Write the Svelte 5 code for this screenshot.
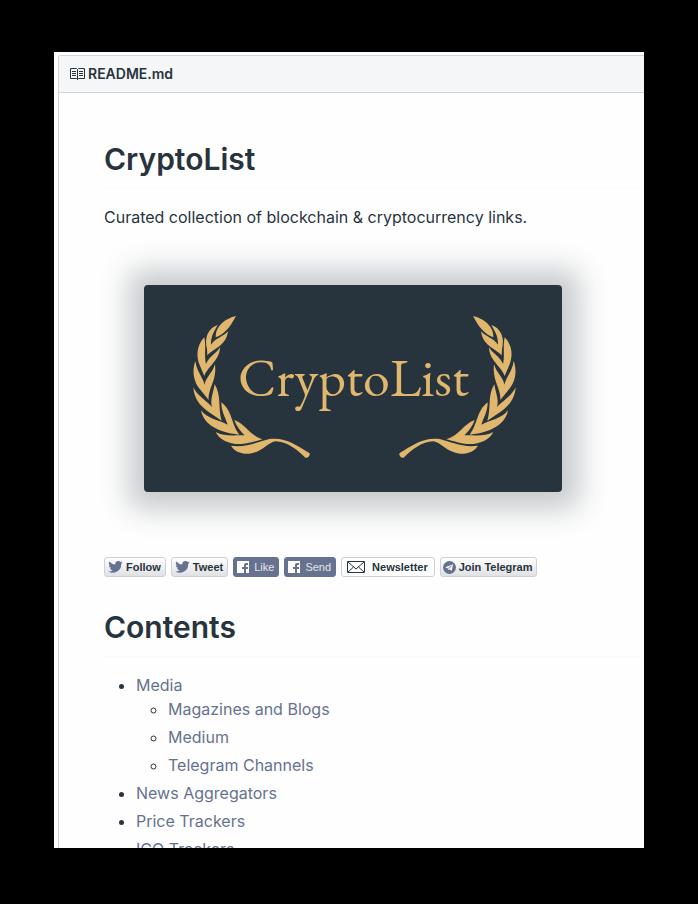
<script>
  const contents = [
    { name: 'Media', children: ['Magazines and Blogs', 'Medium', 'Telegram Channels'] },
    { name: 'News Aggregators' },
    { name: 'Price Trackers' },
    { name: 'ICO Trackers' }
  ];
  const slug = (name) => '#' + name.toLowerCase().replaceAll(' ', '-');

  const badges = [
    { label: 'Follow', icon: 'twitter', kind: 'light' },
    { label: 'Tweet', icon: 'twitter', kind: 'light' },
    { label: 'Like', icon: 'facebook', kind: 'solid' },
    { label: 'Send', icon: 'facebook', kind: 'solid' },
    { label: 'Newsletter', icon: 'mail', kind: 'plain' },
    { label: 'Join Telegram', icon: 'telegram', kind: 'light' }
  ];
</script>

{#snippet laurel()}
  <path d="M168 48C139 55 106 76 107 112C134 103 151 80 168 48Z" />
  <path d="M113 75C84 85 72 114 81 147L82 166C102 145 139 137 144 94C129 111 108 113 93 134C92 112 100 97 113 75Z" />
  <path d="M73 112C48 138 49 172 59 195L73 228C84 198 119 182 120 142C107 163 88 169 78 192C72 169 79 142 73 112Z" />
  <path d="M46 183C34 216 43 248 60 268L86 300C84 265 111 242 105 193C96 222 78 230 74 254C68 231 50 214 46 183Z" />
  <path d="M40 262C42 295 59 317 85 335L125 362C113 322 125 286 104 253C99 282 90 299 96 321C76 299 52 288 40 262Z" />
  <path d="M63 331C68 362 94 383 128 394C145 400 160 402 178 404C153 372 158 333 124 307C124 335 135 350 143 374C116 360 83 357 63 331Z" />
  <path d="M107 396C119 422 152 434 184 432C210 431 225 423 248 418C208 406 197 372 163 360C169 379 182 394 194 406C167 405 132 411 107 396Z" />
  <path d="M153 437C198 444 238 424 268 417C316 411 345 433 388 459Q391 463 387 469Q382 475 376 473C350 448 321 425 287 424C265 426 246 458 207 461C181 462 163 453 153 437Z" />
{/snippet}

<div class="stage">
  <main class="page">
    <section class="readme">
      <header class="file">
        <svg width="16" height="14" viewBox="0 0 16 14" fill="none" stroke="currentColor" aria-hidden="true">
          <path d="M.5 1.5H6.500L7.500 2.500L8.500 1.500H14.500V11.500H8.500L7.500 12.500L6.500 11.500H.5ZM7.500 2.500V13M2 4.500H6M2 6.500H6M2 8.500H6M9 4.500H13M9 6.500H13M9 8.500H13" />
        </svg>
        <span>README.md</span>
      </header>

      <article>
        <h1>CryptoList</h1>
        <p>Curated collection of blockchain &amp; cryptocurrency links.</p>

        <div class="banner">
          <svg viewBox="0 0 418 207" role="img" aria-label="CryptoList">
            <g fill="#e0b76d">
              <g transform="translate(36 15) scale(.3333)">{@render laurel()}</g>
              <g transform="translate(385 15) scale(-.3333 .3333)">{@render laurel()}</g>
              <text x="94" y="111">CryptoList</text>
            </g>
          </svg>
        </div>

        <div class="badges">
          {#each badges as badge}
            <a class="badge {badge.kind} {badge.icon}" href={slug(badge.label)}>
              {#if badge.icon === 'twitter'}
                <svg width="15" height="12" viewBox="0 0 24 20" fill="currentColor" aria-hidden="true">
                  <path d="M24 2.400a10 10 0 0 1-2.800.8A5 5 0 0 0 23.300.4a10 10 0 0 1-3.100 1.200A4.900 4.900 0 0 0 11.800 6 14 14 0 0 1 1.700.9a4.900 4.900 0 0 0 1.500 6.600A5 5 0 0 1 1 6.900a4.900 4.900 0 0 0 3.900 4.900 5 5 0 0 1-2.200.1 4.900 4.900 0 0 0 4.600 3.400A10 10 0 0 1 0 17.300a14 14 0 0 0 21.500-12.400A10 10 0 0 0 24 2.400Z" />
                </svg>
              {:else if badge.icon === 'facebook'}
                <svg width="12" height="12" viewBox="0 0 12 12" aria-hidden="true">
                  <path fill="#fff" d="M0 0H12V12H9V8H11V6H9V4.500Q9 4 10 4H11V2H9Q7 2 7 4V6H5V8H7V12H0Z" />
                </svg>
              {:else if badge.icon === 'mail'}
                <svg width="18" height="12" viewBox="0 0 18 12" fill="none" stroke="currentColor" aria-hidden="true">
                  <path d="M.5.5H17.500V11.500H.5ZM1 1L9 8L17 1M1 11L6.500 6M17 11L11.500 6" />
                </svg>
              {:else}
                <svg width="13" height="13" viewBox="0 0 13 13" aria-hidden="true">
                  <circle cx="6.500" cy="6.500" r="6.500" fill="#66728f" />
                  <path fill="#fff" d="M2.300 6.300L10 3.200L8.800 9.800L6.500 8.200L5.400 9.300L5 7.400Z" />
                  <path stroke="#66728f" stroke-width=".6" d="M5 7.400L8.500 4.700L5.700 7.800" fill="none" />
                </svg>
              {/if}
              <span>{badge.label}</span>
            </a>
          {/each}
        </div>

        <h1>Contents</h1>
        <ul>
          {#each contents as item}
            <li>
              <a href={slug(item.name)}>{item.name}</a>
              {#if item.children}
                <ul>
                  {#each item.children as child}
                    <li><a href={slug(child)}>{child}</a></li>
                  {/each}
                </ul>
              {/if}
            </li>
          {/each}
        </ul>
      </article>
    </section>
  </main>
</div>

<style>
  :global(body) {
    background: #000;
  }
  .stage {
    box-sizing: border-box;
    height: 100vh;
    padding: 52px 54px 56px;
    display: grid;
    grid-template: minmax(0, 1fr) / minmax(0, 1fr);
    background: #000;
  }
  .page {
    overflow: hidden;
    padding: 3px 0 0 4px;
    background: #fefefe;
    color: #28343d;
    font: 16px/24px Inter, "Liberation Sans", sans-serif;
  }
  .readme {
    border: 1px solid #d0d3d7;
    border-width: 1px 0 0 1px;
    border-top-left-radius: 3px;
  }
  .file {
    display: flex;
    align-items: center;
    gap: 2px;
    height: 36px;
    padding-left: 11px;
    border-bottom: 1px solid #d0d3d7;
    background: #f5f6f7;
    font-size: 14px;
    font-weight: 600;
  }
  article {
    padding: 45px 0 0 45px;
  }
  h1 {
    margin: 0 0 16px;
    padding-bottom: 8px;
    border-bottom: 1px solid #f9fafa;
    font-size: 30px;
    line-height: 42px;
    font-weight: 600;
  }
  p {
    margin: 0;
  }
  .banner {
    max-width: 418px;
    margin: 56px 82px 65px 40px;
    border-radius: 4px;
    background: #28343d;
    box-shadow: 1px 1px 28px 17px rgba(40, 52, 61, 0.25);
  }
  .banner svg {
    display: block;
    width: 100%;
  }
  .banner text {
    font-family: "EB Garamond", "Liberation Serif", serif;
    font-size: 54px;
  }
  .badges {
    display: flex;
    gap: 5px;
    margin-bottom: 29px;
  }
  .badge {
    box-sizing: border-box;
    display: flex;
    align-items: center;
    gap: 3px;
    height: 20px;
    padding: 0 4px 0 3px;
    border: 1px solid #cdd1d5;
    border-radius: 3px;
    color: #28343d;
    font: bold 11px/18px "Liberation Sans", sans-serif;
    text-decoration: none;
    white-space: nowrap;
  }
  .light {
    background: linear-gradient(#fefefe, #dfe1e4);
  }
  .twitter svg {
    color: #66728f;
  }
  .solid {
    gap: 5px;
    border-color: #66728f;
    background: #66728f;
    color: #e4e6ea;
    font-weight: normal;
  }
  .mail {
    gap: 7px;
    padding: 0 6px 0 5px;
  }
  .telegram {
    padding-left: 2px;
  }
  ul {
    margin: 0;
    padding-left: 32px;
  }
  li + li {
    margin-top: 4px;
  }
  ul a {
    color: #66728f;
    text-decoration: none;
  }
</style>
